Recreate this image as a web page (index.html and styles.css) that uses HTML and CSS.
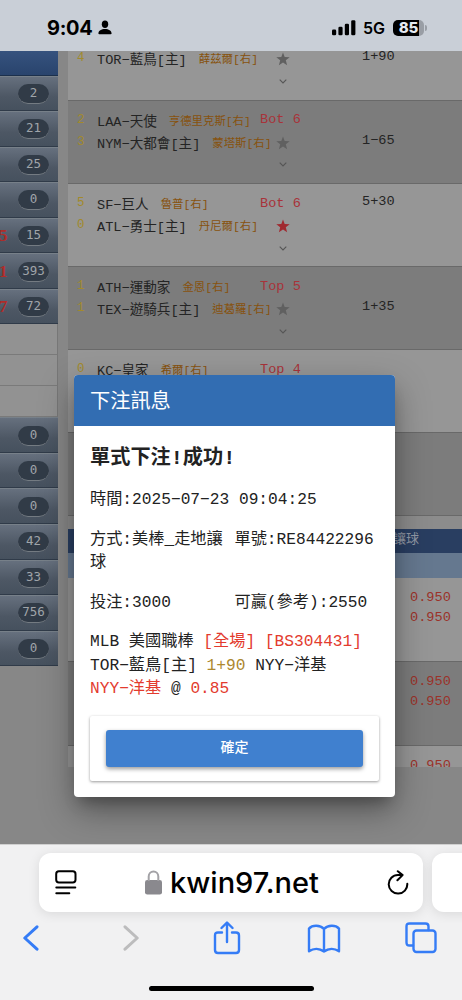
FILE: index.html
```
<!DOCTYPE html>
<html lang="zh-Hant">
<head>
<meta charset="utf-8">
<title>kwin97.net</title>
<link rel="stylesheet" href="styles.css">
</head>
<body>
<svg class="defs" width="0" height="0">
  <symbol id="star" viewBox="0 0 14 14"><path d="M7 .4 8.700 5 13.700 5.200 9.800 8.300 11.100 13.200 7 10.400 2.900 13.200 4.200 8.300.3 5.200 5.300 5Z"/></symbol>
  <symbol id="chev" viewBox="0 0 8 5"><path d="M.7.7 4 3.900 7.300.7" fill="none" stroke="currentColor" stroke-width="1.100"/></symbol>
</svg>
<div class="phone">
  <header class="status">
    <span class="time">9:04</span>
    <svg class="person" width="14" height="15" viewBox="0 0 14 15"><ellipse cx="7" cy="4.200" rx="3.200" ry="3.700"/><path d="M.4 13.400C.4 10.800 3.400 9 7 9s6.600 1.800 6.600 4.400q0 .8-1 .8H1.400q-1 0-1-.8Z"/></svg>
    <span class="fill"></span>
    <svg class="signal" width="24" height="16" viewBox="0 0 24 16"><rect y="9.600" width="4.200" height="5.600" rx="1.300"/><rect x="6.400" y="6.800" width="4.200" height="8.400" rx="1.300"/><rect x="12.800" y="3.700" width="4.200" height="11.500" rx="1.300"/><rect x="19.200" y=".3" width="4.200" height="14.900" rx="1.300"/></svg>
    <span class="net">5G</span>
    <span class="battery">85</span><i class="nub"></i>
  </header>
  <main class="page">
    <aside class="side">
      <div class="side-head"></div>
      <div class="item"><b></b><span>2</span></div>
      <div class="item"><b></b><span>21</span></div>
      <div class="item"><b></b><span>25</span></div>
      <div class="item"><b></b><span>0</span></div>
      <div class="item"><b>5</b><span>15</span></div>
      <div class="item"><b>1</b><span>393</span></div>
      <div class="item"><b>7</b><span>72</span></div>
      <div class="blank"></div><div class="blank"></div><div class="blank"></div>
      <div class="item"><b></b><span>0</span></div>
      <div class="item"><b></b><span>0</span></div>
      <div class="item"><b></b><span>0</span></div>
      <div class="item"><b></b><span>42</span></div>
      <div class="item"><b></b><span>33</span></div>
      <div class="item"><b></b><span>756</span></div>
      <div class="item"><b></b><span>0</span></div>
    </aside>
    <section class="board">
      <div class="game first">
        <div class="line"><i>4</i><span>TOR−藍鳥[主]</span><small>薛茲爾[右]</small><em><svg class="star"><use href="#star"/></svg></em><strong>1+90</strong></div>
        <svg class="chev"><use href="#chev"/></svg>
      </div>
      <div class="game alt">
        <div class="line"><i>2</i><span>LAA−天使</span><small>亨德里克斯[右]</small><em>Bot 6</em></div>
        <div class="line"><i>3</i><span>NYM−大都會[主]</span><small>蒙塔斯[右]</small><em><svg class="star"><use href="#star"/></svg></em><strong>1−65</strong></div>
        <svg class="chev"><use href="#chev"/></svg>
      </div>
      <div class="game">
        <div class="line"><i>5</i><span>SF−巨人</span><small>魯普[右]</small><em>Bot 6</em><strong>5+30</strong></div>
        <div class="line"><i>0</i><span>ATL−勇士[主]</span><small>丹尼爾[右]</small><em><svg class="star on"><use href="#star"/></svg></em></div>
        <svg class="chev"><use href="#chev"/></svg>
      </div>
      <div class="game alt">
        <div class="line"><i>1</i><span>ATH−運動家</span><small>金恩[右]</small><em>Top 5</em></div>
        <div class="line"><i>1</i><span>TEX−遊騎兵[主]</span><small>迪葛羅[右]</small><em><svg class="star"><use href="#star"/></svg></em><strong>1+35</strong></div>
        <svg class="chev"><use href="#chev"/></svg>
      </div>
      <div class="game">
        <div class="line"><i>0</i><span>KC−皇家</span><small>希爾[右]</small><em>Top 4</em></div>
      </div>
      <div class="game alt"></div>
      <div class="gap"></div>
      <div class="band">讓球</div>
      <div class="subband"></div>
      <div class="odds"><p>0.950</p><p>0.950</p></div>
      <div class="odds alt"><p>0.950</p><p>0.950</p></div>
      <div class="odds last"><p>0.950</p></div>
    </section>
    <div class="modal">
      <h1>下注訊息</h1>
      <div class="body">
        <h2>單式下注!成功!</h2>
        <p>時間:2025−07−23 09:04:25</p>
        <div class="pair"><p>方式:美棒_走地讓球</p><p>單號:RE84422296</p></div>
        <div class="pair"><p>投注:3000</p><p>可贏(參考):2550</p></div>
        <p class="bet">MLB 美國職棒 <span class="red">[全場] [BS304431]</span><br>TOR−藍鳥[主] <span class="gold">1+90</span> NYY−洋基<br><span class="red">NYY−洋基</span> @ <span class="red">0.85</span></p>
        <div class="card"><button>確定</button></div>
      </div>
    </div>
  </main>
  <footer class="browser">
    <div class="tabs">
      <div class="url">
        <svg width="22" height="26" viewBox="0 0 22 26" fill="none" stroke="#000" stroke-width="2" stroke-linecap="round"><rect x="1.200" y="1.300" width="19.300" height="11.200" rx="2.700"/><path d="M1.300 17.600h19M1.300 23.200h13"/></svg>
        <div class="host"><svg width="17" height="25" viewBox="0 0 17 25"><rect y="10" width="17" height="14.500" rx="2.300" fill="#8a898e"/><path d="M3.700 11V6.500a4.800 5 0 0 1 9.600 0V11" fill="none" stroke="#a3a2a6" stroke-width="2"/></svg><span>kwin97.net</span></div>
        <svg width="22" height="26" viewBox="0 0 22 26" fill="none" stroke="#000" stroke-width="2" stroke-linecap="round" stroke-linejoin="round"><path d="M20.300 13.800A9.300 9.300 0 1 1 11 5h4.600M10.800 1.200l4.800 3.900-5.200 5.200"/></svg>
      </div>
      <div class="next"></div>
    </div>
    <nav class="tools">
      <svg class="back" width="16" height="26" viewBox="0 0 16 26"><path d="M14 1.800 1.800 13 14 24.200"/></svg>
      <svg class="off" width="16" height="26" viewBox="0 0 16 26"><path d="M2 1.800 14.200 13 2 24.200"/></svg>
      <svg class="share" width="28" height="34" viewBox="0 0 28 34"><path d="M9 11.500H5q-3 0-3 3V29q0 3 3 3h18q3 0 3-3V14.500q0-3-3-3h-4M14 21V1.600M8.500 7 14 1.500 19.500 7"/></svg>
      <svg class="book" width="34" height="29" viewBox="0 0 34 29"><path d="M17 5C13 .8 5.500.7 2 4.600V27.300C6.500 24.200 12.500 24.200 17 27.500c4.500-3.300 10.500-3.300 15-.2V4.600C28.500.7 21 .8 17 5v22.500"/></svg>
      <svg width="32" height="32" viewBox="0 0 32 32"><path d="M8 23.500H4.500q-3 0-3-3v-16q0-3 3-3h16q3 0 3 3V8"/><rect x="8.500" y="8.500" width="22" height="21.500" rx="3"/></svg>
    </nav>
    <div class="home"></div>
  </footer>
</div>
</body>
</html>
```
FILE: styles.css
```
* { box-sizing: border-box; }
body { margin: 0; }
h1, h2, p { margin: 0; font-weight: 400; }
.defs { display: block; }
.phone { width: 462px; height: 1000px; display: flex; flex-direction: column; overflow: hidden; font-family: "Liberation Mono", "Noto Sans CJK TC", monospace; }

.status { height: 51px; flex: none; background: #c9cfd7; display: flex; align-items: center; padding: 4px 35px 0 47px; font-family: Inter, sans-serif; }
.time { font-size: 20px; font-weight: 700; letter-spacing: -.3px; }
.person { margin-left: 6px; }
.fill { flex: 1; }
.net { font-size: 16px; font-weight: 600; margin: 0 7px; width: 23px; }
.battery { width: 31px; height: 16px; border-radius: 5px; background: linear-gradient(90deg, #000 26px, #999ea5 26px); color: #e6eaf0; font-size: 15px; font-weight: 800; line-height: 16px; text-align: center; }
.nub { width: 2px; height: 6px; margin-left: 1px; border-radius: 0 2px 2px 0; background: #999ea5; }

.page { position: relative; height: 793px; flex: none; display: flex; align-items: flex-start; gap: 10px; background: #878787; overflow: hidden; }
.side { width: 58px; flex: none; }
.side-head { height: 24.500px; background: linear-gradient(#36527e, #29446d); border-bottom: 1px solid #1c304c; }
.item { height: 35.550px; display: flex; align-items: center; justify-content: space-between; padding: 1px 9px 0 0; background: linear-gradient(#66707e, #4d5764 60%, #46515e); border-top: 1px solid #778089; border-bottom: 1px solid #303b49; }
.item b { font: 700 17px "Liberation Serif", serif; color: #b02c29; margin-left: -1px; }
.item span { width: 31px; height: 20px; border-radius: 10px; background: #313b47; border-bottom: 1px solid #747b82; color: #a0a5aa; font: 12.500px/17px "DejaVu Sans Mono", monospace; text-align: center; }
.blank { height: 31px; background: #929292; border-bottom: 1px solid #7a7a7a; border-right: 1px solid #777; }

.board { flex: 1; font-size: 13.600px; color: #242424; }
.game { display: flow-root; height: 83.200px; background: #969696; border-bottom: 1px solid #696969; padding-top: 8.500px; }
.alt { background: #7c7c7c; }
.first { height: 49.500px; padding-top: 0; }
.first .line { margin-top: -4px; }
.line { display: flex; align-items: center; position: relative; height: 21.700px; padding-left: 9px; white-space: pre; }
.line i { width: 20px; font-style: normal; font-size: 12.500px; color: #a28a2c; }
.line small { margin-left: 12px; font-size: 11.400px; color: #87520d; }
.line em { position: absolute; left: 192px; font-style: normal; color: #a8333a; display: flex; }
.line strong { position: absolute; left: 294px; font-weight: 400; margin-top: -3px; }
.star { width: 14px; height: 14px; margin: 2px 0 0 16px; fill: #606060; }
.star.on { fill: #a02a30; }
.chev { display: block; width: 8px; height: 5px; margin: 10px 0 0 211px; color: #555; }
.gap { height: 12.500px; background: #8c8c8c; }
.band { height: 24px; background: #293e61; color: #9299a5; padding-left: 325px; line-height: 21px; font-size: 13px; }
.subband { height: 25px; background: #65788f; }
.odds { height: 83.800px; background: #969696; border-bottom: 1px solid #696969; padding: 10px 0 0 342px; color: #9b3229; line-height: 20.500px; }
.odds.alt { background: #7c7c7c; }
.odds.last { height: 21px; overflow: hidden; border: 0; }

.modal { position: absolute; left: 74px; top: 324px; width: 320.500px; height: 422px; background: #fff; border-radius: 4px; overflow: hidden; box-shadow: 0 10px 14px -6px rgba(0,0,0,.28), 0 14px 34px rgba(0,0,0,.35); color: #222; font-size: 16.200px; line-height: 23.500px; }
.modal h1 { height: 50.500px; padding: 3px 0 0 16px; background: #326db2; color: #fff; font-size: 20.200px; line-height: 50px; }
.body { padding: 17.500px 16px 16px; display: flex; flex-direction: column; gap: 16px; }
.modal h2 { font-size: 20.200px; font-weight: 700; line-height: 31px; margin-bottom: -1px; }
.pair { display: grid; grid-template-columns: 144.500px 1fr; }
.red { color: #e33b2e; }
.gold { color: #ad882f; }
.card { width: 289px; height: 65px; padding: 14px 16px; background: #fff; border-radius: 2px; box-shadow: 0 1px 3px rgba(0,0,0,.4); margin-top: -2px; }
.card button { display: block; width: 257px; height: 37px; border: 0; border-radius: 3px; background: #4080cf; color: #fff; font: 500 14px "Noto Sans CJK TC", sans-serif; box-shadow: 0 2px 4px rgba(0,0,0,.4); padding: 0 0 5px; }

.browser { flex: 1; background: #f1f1f2; display: flex; flex-direction: column; align-items: center; border-top: 1px solid #d0d0d0; }
.tabs { width: 462px; display: flex; gap: 9px; padding: 8px 0 0 39px; overflow: hidden; height: 78px; flex: none; }
.url, .next { height: 59px; flex: none; border-radius: 12px; background: #fff; box-shadow: 0 2px 12px rgba(0,0,0,.1); }
.url { width: 384px; display: flex; align-items: center; justify-content: space-between; padding: 0 14px 0 16px; }
.next { width: 80px; }
.host { display: flex; align-items: center; gap: 8px; font: 500 29px Inter, sans-serif; letter-spacing: 0; }
.tools { width: 462px; padding-left: 23px; height: 34px; margin-top: -2px; display: flex; align-items: center; }
.tools svg { flex: none; fill: none; stroke: #357cf6; stroke-width: 2.400; stroke-linecap: round; stroke-linejoin: round; }
.tools .back { margin-right: 84px; stroke-width: 3; }
.tools .off { margin-right: 74px; stroke: #bcbcbd; stroke-width: 3; }
.tools .share { margin-right: 66px; }
.tools .book { margin-right: 64px; }
.home { width: 165px; height: 5px; border-radius: 3px; background: #000; margin-top: 31px; }
```
